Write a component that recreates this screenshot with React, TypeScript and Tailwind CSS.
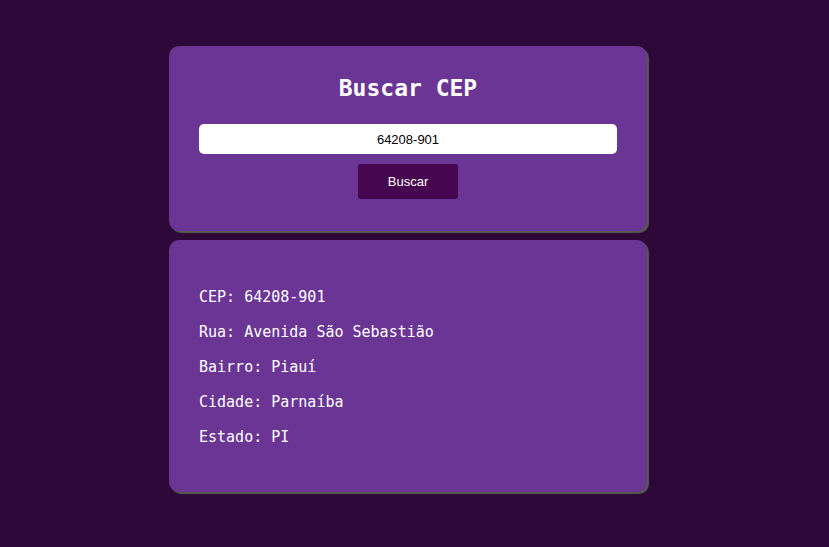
export default function App() {
  const info = [
    ["CEP", "64208-901"],
    ["Rua", "Avenida São Sebastião"],
    ["Bairro", "Piauí"],
    ["Cidade", "Parnaíba"],
    ["Estado", "PI"],
  ];

  return (
    <div className="min-h-[547px] w-full bg-[#2d0838] pt-[46px] pl-[169px] font-['DejaVu_Sans_Mono',monospace] text-white">
      <div className="flex w-[478px] flex-col gap-[9px]">
        {/* busca */}
        <div className="flex flex-col items-center rounded-[10px] bg-[#6a3595] px-[30px] pt-[28px] pb-[32px] shadow-[2px_2px_1px_#575a52]">
          <h1 className="text-[23px] leading-[28px] font-bold">Buscar CEP</h1>
          <input
            defaultValue="64208-901"
            className="mt-[22px] h-[30px] w-full rounded-[5px] bg-white text-center font-['Liberation_Sans',Arial,sans-serif] text-[13px] text-black outline-none"
          />
          <button className="mt-[10px] h-[35px] w-[100px] rounded-[3px] bg-[#470650] pt-[1px] font-['Liberation_Sans',Arial,sans-serif] text-[13px] text-white">
            Buscar
          </button>
        </div>

        {/* resultado */}
        <div className="flex flex-col gap-[15px] rounded-[10px] bg-[#6a3595] px-[30px] pt-[47px] pb-[45px] shadow-[2px_2px_1px_#575a52]">
          {info.map(([label, value]) => (
            <p key={label} className="text-[15px] leading-[20px]">
              {label}: {value}
            </p>
          ))}
        </div>
      </div>
    </div>
  );
}
